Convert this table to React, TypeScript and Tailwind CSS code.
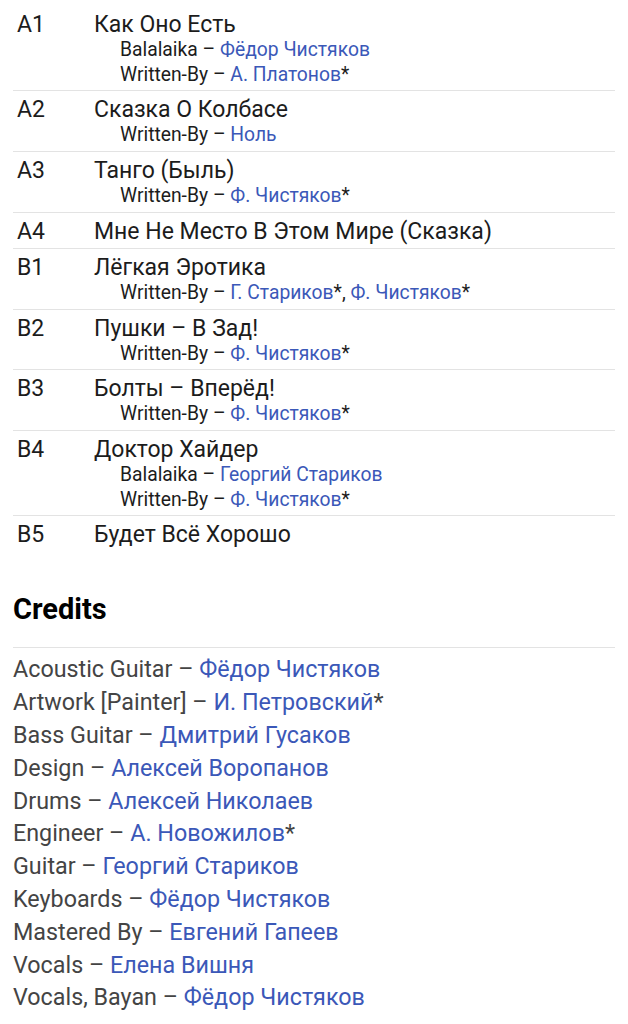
type Credit = { role: string; names: { n: string; star?: boolean }[] };
type Track = { pos: string; title: string; credits: Credit[] };

const wb = (...names: { n: string; star?: boolean }[]): Credit => ({ role: "Written-By", names });

const tracks: Track[] = [
  { pos: "A1", title: "Как Оно Есть", credits: [{ role: "Balalaika", names: [{ n: "Фёдор Чистяков" }] }, wb({ n: "А. Платонов", star: true })] },
  { pos: "A2", title: "Сказка О Колбасе", credits: [wb({ n: "Ноль" })] },
  { pos: "A3", title: "Танго (Быль)", credits: [wb({ n: "Ф. Чистяков", star: true })] },
  { pos: "A4", title: "Мне Не Место В Этом Мире (Сказка)", credits: [] },
  { pos: "B1", title: "Лёгкая Эротика", credits: [wb({ n: "Г. Стариков", star: true }, { n: "Ф. Чистяков", star: true })] },
  { pos: "B2", title: "Пушки – В Зад!", credits: [wb({ n: "Ф. Чистяков", star: true })] },
  { pos: "B3", title: "Болты – Вперёд!", credits: [wb({ n: "Ф. Чистяков", star: true })] },
  { pos: "B4", title: "Доктор Хайдер", credits: [{ role: "Balalaika", names: [{ n: "Георгий Стариков" }] }, wb({ n: "Ф. Чистяков", star: true })] },
  { pos: "B5", title: "Будет Всё Хорошо", credits: [] },
];

const credits: Credit[] = [
  { role: "Acoustic Guitar", names: [{ n: "Фёдор Чистяков" }] },
  { role: "Artwork [Painter]", names: [{ n: "И. Петровский", star: true }] },
  { role: "Bass Guitar", names: [{ n: "Дмитрий Гусаков" }] },
  { role: "Design", names: [{ n: "Алексей Воропанов" }] },
  { role: "Drums", names: [{ n: "Алексей Николаев" }] },
  { role: "Engineer", names: [{ n: "А. Новожилов", star: true }] },
  { role: "Guitar", names: [{ n: "Георгий Стариков" }] },
  { role: "Keyboards", names: [{ n: "Фёдор Чистяков" }] },
  { role: "Mastered By", names: [{ n: "Евгений Гапеев" }] },
  { role: "Vocals", names: [{ n: "Елена Вишня" }] },
  { role: "Vocals, Bayan", names: [{ n: "Фёдор Чистяков" }] },
];

const Names = ({ names }: { names: Credit["names"] }) => (
  <>
    {names.map((x, i) => (
      <span key={i}>
        {i > 0 && ", "}
        <a className="text-[#3b58b8]">{x.n}</a>
        {x.star && "*"}
      </span>
    ))}
  </>
);

export default function App() {
  return (
    <div className="bg-white min-h-screen px-[13px] pt-[6px] text-[#1c1c1c]" style={{ fontFamily: "Roboto, 'Noto Sans', sans-serif" }}>
      <div>
        {tracks.map((t, i) => (
          <div key={t.pos} className={`flex pt-[5px] pb-[3px] ${i < tracks.length - 1 ? "border-b border-[#e3e3e3]" : ""}`}>
            <div className="w-[81px] shrink-0 pl-1 text-[23px] leading-[27px]">{t.pos}</div>
            <div>
              <div className="text-[23px] leading-[27px]">{t.title}</div>
              {t.credits.map((c, j) => (
                <div key={j} className="pl-[26px] text-[19.3px] leading-[24.7px]">
                  {c.role} – <Names names={c.names} />
                </div>
              ))}
            </div>
          </div>
        ))}
      </div>

      <h2 className="mt-[40px] text-[29px] font-bold leading-[36px] text-black">Credits</h2>
      <div className="mt-[20px] border-t border-[#e3e3e3] pt-[5px]">
        {credits.map((c) => (
          <div key={c.role} className="text-[23.3px] leading-[32.8px] text-[#444]">
            {c.role} – <Names names={c.names} />
          </div>
        ))}
      </div>
    </div>
  );
}
